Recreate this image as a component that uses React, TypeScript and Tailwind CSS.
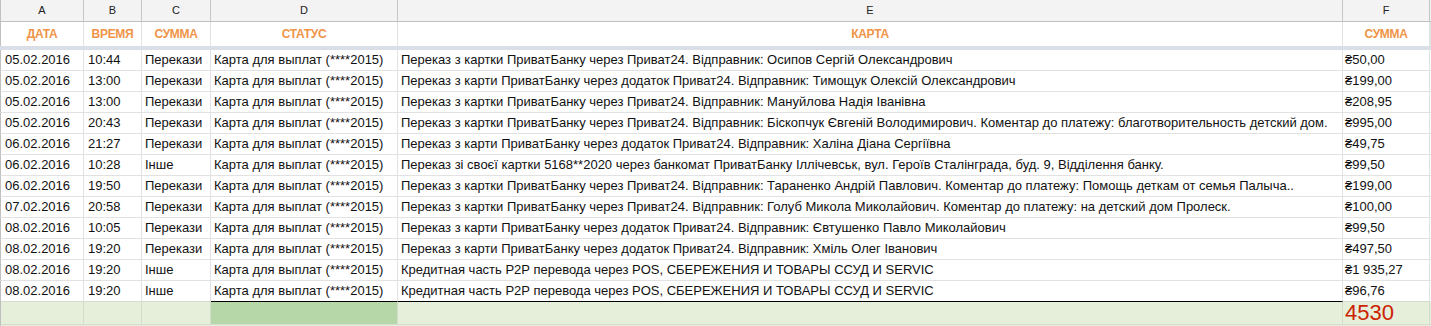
import React from "react";

const cols = [
  { key: "A", label: "ДАТА", w: "w-[83px]" },
  { key: "B", label: "ВРЕМЯ", w: "w-[58px]" },
  { key: "C", label: "СУММА", w: "w-[69px]" },
  { key: "D", label: "СТАТУС", w: "w-[187px]" },
  { key: "E", label: "КАРТА", w: "w-[945px]" },
  { key: "F", label: "СУММА", w: "w-[87px]" },
];

const card = "Карта для выплат (****2015)";

const rows = [
  ["05.02.2016", "10:44", "Перекази", "Переказ з картки ПриватБанку через Приват24. Відправник: Осипов Сергій Олександрович", "₴50,00"],
  ["05.02.2016", "13:00", "Перекази", "Переказ з карти ПриватБанку через додаток Приват24. Відправник: Тимощук Олексій Олександрович", "₴199,00"],
  ["05.02.2016", "13:00", "Перекази", "Переказ з картки ПриватБанку через Приват24. Відправник: Мануйлова Надія Іванівна", "₴208,95"],
  ["05.02.2016", "20:43", "Перекази", "Переказ з картки ПриватБанку через Приват24. Відправник: Біскопчук Євгеній Володимирович. Коментар до платежу: благотворительность детский дом.", "₴995,00"],
  ["06.02.2016", "21:27", "Перекази", "Переказ з карти ПриватБанку через додаток Приват24. Відправник: Халіна Діана Сергіївна", "₴49,75"],
  ["06.02.2016", "10:28", "Інше", "Переказ зі своєї картки 5168**2020 через банкомат ПриватБанку Іллічевськ, вул. Героїв Сталінграда, буд. 9, Відділення банку.", "₴99,50"],
  ["06.02.2016", "19:50", "Перекази", "Переказ з картки ПриватБанку через Приват24. Відправник: Тараненко Андрій Павлович. Коментар до платежу: Помощь деткам от семья Палыча..", "₴199,00"],
  ["07.02.2016", "20:58", "Перекази", "Переказ з картки ПриватБанку через Приват24. Відправник: Голуб Микола Миколайович. Коментар до платежу: на детский дом Пролеск.", "₴100,00"],
  ["08.02.2016", "10:05", "Перекази", "Переказ з карти ПриватБанку через додаток Приват24. Відправник: Євтушенко Павло Миколайович", "₴99,50"],
  ["08.02.2016", "19:20", "Перекази", "Переказ з карти ПриватБанку через додаток Приват24. Відправник: Хміль Олег Іванович", "₴497,50"],
  ["08.02.2016", "19:20", "Інше", "Кредитная часть P2P перевода через POS, СБЕРЕЖЕНИЯ И ТОВАРЫ ССУД И SERVIC", "₴1 935,27"],
  ["08.02.2016", "19:20", "Інше", "Кредитная часть P2P перевода через POS, СБЕРЕЖЕНИЯ И ТОВАРЫ ССУД И SERVIC", "₴96,76"],
];

export default function App() {
  return (
    <div className="w-[1431px] h-[326px] overflow-hidden bg-white text-[13px] text-[#111] font-['Liberation_Sans',Arial,sans-serif]">
      {/* column letters */}
      <div className="flex h-[22px] bg-[#f3f3f3] border-b border-[#c0c0c0] border-l border-l-[#c0c0c0]">
        {cols.map((c) => (
          <div key={c.key} className={`${c.w} shrink-0 border-r border-[#c6c6c6] flex items-center justify-center text-[11px] text-[#222]`}>
            {c.key}
          </div>
        ))}
        <div className="flex-1" />
      </div>

      {/* field labels */}
      <div className="flex h-[24px] border-l border-[#c0c0c0]">
        {cols.map((c) => (
          <div key={c.key} className={`${c.w} shrink-0 border-r border-[#e2e2e2] flex items-center justify-center text-[12px] font-bold text-[#ef9448] tracking-[-0.3px]`}>
            {c.label}
          </div>
        ))}
        <div className="flex-1 border-l border-[#e2e2e2]" />
      </div>
      <div className="h-[4px] bg-[#dadee6]" />

      {/* data */}
      {rows.map((r, i) => (
        <div key={i} className="flex h-[21px] border-b border-[#e2e2e2] border-l border-l-[#c0c0c0]">
          <div className="w-[83px] shrink-0 border-r border-[#e2e2e2] px-[4px] flex items-center">{r[0]}</div>
          <div className="w-[58px] shrink-0 border-r border-[#e2e2e2] px-[4px] flex items-center">{r[1]}</div>
          <div className="w-[69px] shrink-0 border-r border-[#e2e2e2] px-[3px] flex items-center">{r[2]}</div>
          <div className="w-[187px] shrink-0 border-r border-[#e2e2e2] px-[3px] flex items-center">{card}</div>
          <div className="w-[945px] shrink-0 border-r border-[#e2e2e2] px-[3px] flex items-center whitespace-nowrap overflow-hidden">{r[3]}</div>
          <div className="w-[87px] shrink-0 border-r border-[#e2e2e2] px-[2px] flex items-center">{r[4]}</div>
          <div className="flex-1" />
        </div>
      ))}

      {/* totals */}
      <div className="flex h-[23px] bg-[#e6efda] border-l border-[#c0c0c0] -mt-px">
        <div className="w-[83px] shrink-0 border-r border-t border-[#d6dccd]" />
        <div className="w-[58px] shrink-0 border-r border-t border-[#d6dccd]" />
        <div className="w-[69px] shrink-0 border-r border-t border-[#d6dccd]" />
        <div className="w-[187px] shrink-0 bg-[#b6d7a8] border-r border-[#d6dccd] border-t border-t-black" />
        <div className="w-[945px] shrink-0 border-r border-[#d6dccd] border-t border-t-black" />
        <div className="w-[87px] shrink-0 border-r border-t border-[#d6dccd] pl-[2px] text-[22px] leading-[22px] text-[#cc2200]">4530</div>
        <div className="flex-1" />
      </div>
      <div className="flex h-[4px] bg-[#e6efda] border-t border-[#d6dccd] border-l border-l-[#c0c0c0]">
        <div className="w-[397px] shrink-0" />
      </div>
    </div>
  );
}
